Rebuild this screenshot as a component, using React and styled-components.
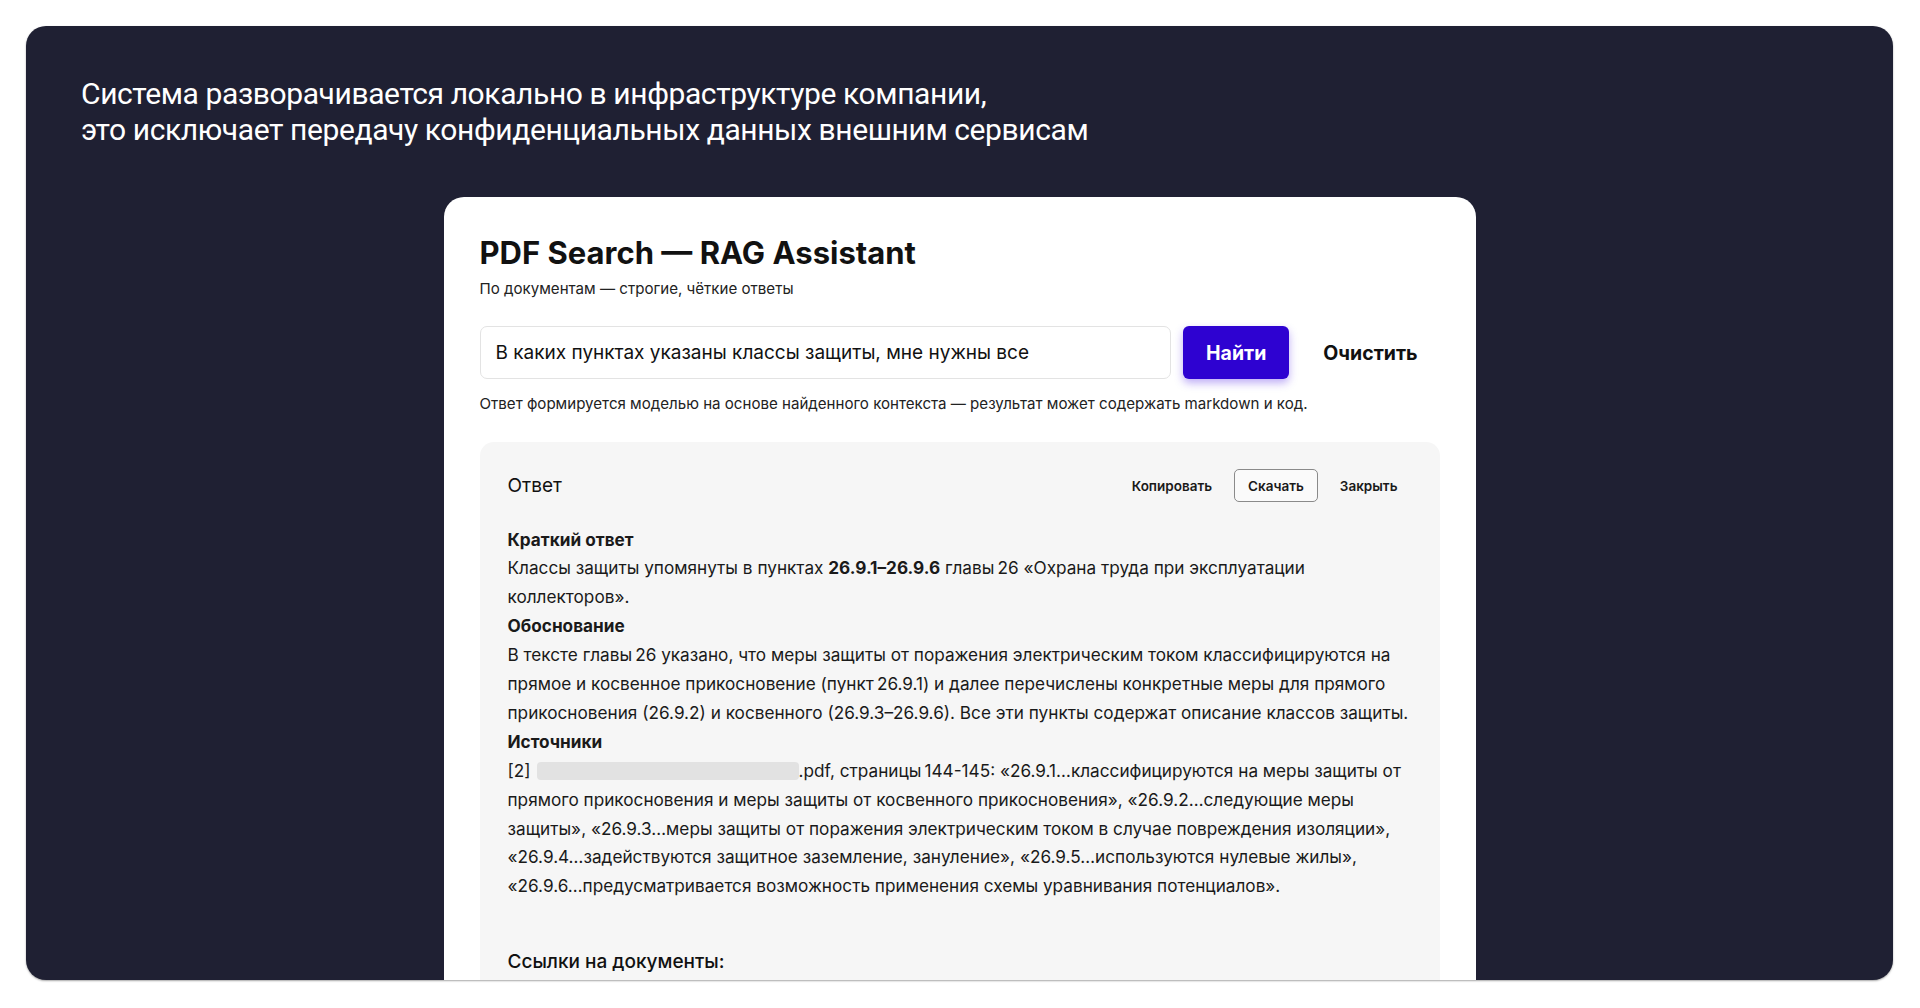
import styled, { createGlobalStyle } from "styled-components"

const GlobalStyle = createGlobalStyle`
  html, body {
    margin: 0;
    padding: 0;
    background: #ffffff;
  }
  * {
    box-sizing: border-box;
  }
`

const Page = styled.div`
  padding: 26px 27px 28px 26px;
  height: 1008px;
`

const Slide = styled.section`
  height: 954px;
  background: #1f2033;
  border-radius: 20px;
  overflow: hidden;
  display: flex;
  flex-direction: column;
  align-items: center;
  box-shadow: 0 1px 2px rgba(0, 0, 0, 0.35);
`

const Lead = styled.h1`
  align-self: stretch;
  margin: 0;
  padding: 50px 55px 49px;
  font-family: Roboto, "Noto Sans", sans-serif;
  font-weight: 400;
  font-size: 30px;
  line-height: 36px;
  letter-spacing: -0.4px;
  color: #ffffff;
`

const Card = styled.main`
  width: 1032px;
  flex-shrink: 0;
  background: #ffffff;
  border-radius: 20px 20px 0 0;
  padding: 37px 36px 0;
  font-family: Inter, "Noto Sans", sans-serif;
  color: #111111;
`

const Title = styled.h2`
  margin: 0;
  font-size: 31px;
  font-weight: 700;
  line-height: 38px;
`

const Subtitle = styled.p`
  margin: 7px 0 0;
  font-size: 15.1px;
  line-height: 20px;
  color: #222;
`

const SearchRow = styled.div`
  display: flex;
  align-items: stretch;
  gap: 12px;
  margin-top: 27px;
  height: 53px;
`

const Query = styled.input`
  flex: 1;
  min-width: 0;
  border: 1px solid #e3e3e3;
  border-radius: 7px;
  padding: 0 15px;
  font-family: Inter, "Noto Sans", sans-serif;
  font-size: 19px;
  color: #111;
  background: #fff;
  outline: none;
`

const Button = styled.button`
  border: none;
  border-radius: 6px;
  font-family: Inter, "Noto Sans", sans-serif;
  font-size: 19.5px;
  font-weight: 700;
  cursor: pointer;
  padding: 0 ${(p) => (p.$primary ? "23px" : "22px")};
  background: ${(p) => (p.$primary ? "#2e02d1" : "transparent")};
  color: ${(p) => (p.$primary ? "#ffffff" : "#111111")};
  box-shadow: ${(p) => (p.$primary ? "0 4px 8px rgba(70, 20, 230, 0.35)" : "none")};
`

const Hint = styled.p`
  margin: 15px 0 0;
  font-size: 15.1px;
  line-height: 20px;
  color: #222;
`

const Panel = styled.section`
  margin-top: 28px;
  background: #f6f6f6;
  border-radius: 14px 14px 0 0;
  padding: 27px 20px 60px 28px;
`

const PanelHead = styled.div`
  display: flex;
  align-items: center;
  justify-content: space-between;
  height: 33px;
  padding-right: 8px;
`

const PanelTitle = styled.h3`
  margin: 0;
  font-size: 19px;
  font-weight: 400;
  color: #111;
`

const Actions = styled.div`
  display: flex;
  gap: 8px;
  height: 33px;
`

const ActionButton = styled.button`
  padding: 0 13px;
  border-radius: 5px;
  border: 1px solid ${(p) => (p.$outlined ? "#8a8a8a" : "transparent")};
  background: ${(p) => (p.$outlined ? "#fafafa" : "transparent")};
  font-family: Inter, "Noto Sans", sans-serif;
  font-size: 13.5px;
  font-weight: 600;
  color: #1a1a1a;
  cursor: pointer;
`

const Answer = styled.div`
  margin-top: 23.5px;
  font-size: 17.2px;
  line-height: 28.9px;
  color: #1a1a1a;
`

const Heading = styled.div`
  font-weight: 700;
`

const Para = styled.p`
  margin: 0;
`

const Redacted = styled.span`
  display: inline-block;
  width: 262px;
  height: 18px;
  margin-left: 6px;
  vertical-align: -3px;
  border-radius: 4px;
  background: #e2e2e2;
`

const LinksTitle = styled.h4`
  margin: 45.5px 0 0;
  font-size: 19px;
  font-weight: 500;
  line-height: 29px;
  color: #111;
`

const n = "\u202F"

function App() {
  return (
    <>
      <GlobalStyle />
      <Page>
        <Slide>
          <Lead>
            Система разворачивается локально в инфраструктуре компании,
            <br />
            это исключает передачу конфиденциальных данных внешним сервисам
          </Lead>
          <Card>
            <Title>PDF Search — RAG Assistant</Title>
            <Subtitle>По документам — строгие, чёткие ответы</Subtitle>
            <SearchRow>
              <Query defaultValue="В каких пунктах указаны классы защиты, мне нужны все" />
              <Button $primary>Найти</Button>
              <Button>Очистить</Button>
            </SearchRow>
            <Hint>
              Ответ формируется моделью на основе найденного контекста — результат может содержать markdown и код.
            </Hint>
            <Panel>
              <PanelHead>
                <PanelTitle>Ответ</PanelTitle>
                <Actions>
                  <ActionButton>Копировать</ActionButton>
                  <ActionButton $outlined>Скачать</ActionButton>
                  <ActionButton>Закрыть</ActionButton>
                </Actions>
              </PanelHead>
              <Answer>
                <Heading>Краткий ответ</Heading>
                <Para>
                  Классы защиты упомянуты в пунктах <b>26.9.1–26.9.6</b> главы{n}26 «Охрана труда при эксплуатации
                  коллекторов».
                </Para>
                <Heading>Обоснование</Heading>
                <Para>
                  В тексте главы{n}26 указано, что меры защиты от поражения электрическим током классифицируются на
                  прямое и косвенное прикосновение (пункт{n}26.9.1) и далее перечислены конкретные меры для прямого
                  прикосновения (26.9.2) и косвенного (26.9.3–26.9.6). Все эти пункты содержат описание классов защиты.
                </Para>
                <Heading>Источники</Heading>
                <Para>
                  [2]
                  <Redacted />
                  .pdf, страницы{n}144-145: «26.9.1…классифицируются на меры защиты от прямого прикосновения и меры
                  защиты от косвенного прикосновения», «26.9.2…следующие меры защиты», «26.9.3…меры защиты от
                  поражения электрическим током в случае повреждения изоляции», «26.9.4…задействуются защитное
                  заземление, зануление», «26.9.5…используются нулевые жилы», «26.9.6…предусматривается возможность
                  применения схемы уравнивания потенциалов».
                </Para>
              </Answer>
              <LinksTitle>Ссылки на документы:</LinksTitle>
            </Panel>
          </Card>
        </Slide>
      </Page>
    </>
  )
}

export default App
